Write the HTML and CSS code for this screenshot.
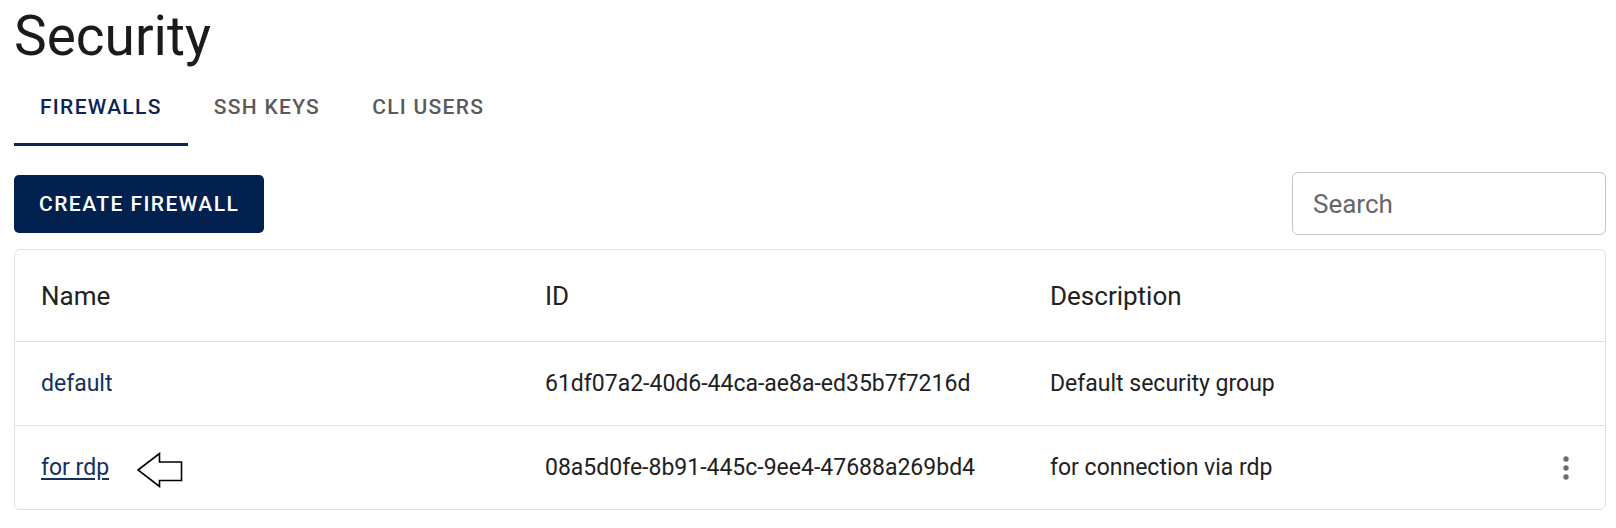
FILE: index.html
```html
<!DOCTYPE html>
<html lang="en">
<head>
<meta charset="utf-8">
<title>Security</title>
<link rel="stylesheet" href="styles.css">
</head>
<body>
<main class="page">
  <h1 class="title">Security</h1>
  <nav class="tabs">
    <a class="tab tab-active">FIREWALLS</a>
    <a class="tab">SSH KEYS</a>
    <a class="tab">CLI USERS</a>
  </nav>
  <div class="toolbar">
    <button class="btn-primary">CREATE FIREWALL</button>
    <div class="search"><input class="search-input" type="text" placeholder="Search"></div>
  </div>
  <div class="table">
    <div class="row head">
      <div class="cell">Name</div>
      <div class="cell">ID</div>
      <div class="cell">Description</div>
      <div class="cell"></div>
    </div>
    <div class="row">
      <div class="cell"><a class="link">default</a></div>
      <div class="cell">61df07a2-40d6-44ca-ae8a-ed35b7f7216d</div>
      <div class="cell">Default security group</div>
      <div class="cell"></div>
    </div>
    <div class="row">
      <div class="cell"><a class="link link-under">for rdp</a>
        <svg class="arrow" width="46" height="36" viewBox="0 0 46 36"><path d="M1 18 L22.5 1.5 L22.5 10 L44.5 10 L44.5 28.5 L22.5 28.5 L22.5 34.5 Z" fill="#fff" stroke="#000" stroke-width="1.6" stroke-linejoin="miter"/></svg>
      </div>
      <div class="cell">08a5d0fe-8b91-445c-9ee4-47688a269bd4</div>
      <div class="cell">for connection via rdp</div>
      <div class="cell cell-menu">
        <svg class="kebab" width="36" height="36" viewBox="0 0 24 24"><circle cx="12" cy="6" r="1.8" fill="#6b6b6b"/><circle cx="12" cy="12" r="1.8" fill="#6b6b6b"/><circle cx="12" cy="18" r="1.8" fill="#6b6b6b"/></svg>
      </div>
    </div>
  </div>
</main>
</body>
</html>
```

FILE: styles.css
```css
* { box-sizing: border-box; }
html, body { margin: 0; padding: 0; background: #fff; }
body {
  font-family: Roboto, "Noto Sans", "Liberation Sans", sans-serif;
  color: #212121;
}
.page {
  padding: 0 10px 0 14px;
}
.title {
  margin: 4px 0 0 0;
  font-size: 55px;
  font-weight: 400;
  line-height: 64px;
  color: #1b1b1b;
}
.tabs {
  display: flex;
  margin-top: 6px;
  height: 72px;
}
.tab {
  display: flex;
  align-items: center;
  padding: 0 26px 3px 26px;
  font-size: 21px;
  font-weight: 500;
  letter-spacing: 1.3px;
  color: #5a5a5a;
  border-bottom: 3px solid transparent;
}
.tab-active {
  color: #0d2553;
  border-bottom-color: #0d2553;
}
.toolbar {
  display: flex;
  justify-content: space-between;
  align-items: flex-start;
  margin-top: 26px;
}
.btn-primary {
  margin-top: 3px;
  height: 58px;
  padding: 0 25px 0 25px;
  border: none;
  border-radius: 5px;
  background: #03214f;
  color: #fff;
  font-family: inherit;
  font-size: 21px;
  font-weight: 500;
  letter-spacing: 1.45px;
}
.search {
  width: 314px;
  height: 63px;
  border: 1px solid #c4c4c4;
  border-radius: 6px;
  display: flex;
  align-items: center;
}
.search-input {
  width: 100%;
  border: none;
  outline: none;
  background: transparent;
  padding: 0 0 0 20px;
  font-family: inherit;
  font-size: 26px;
  color: #212121;
}
.search-input::placeholder { color: #666; opacity: 1; }
.table {
  margin-top: 14px;
  border: 1px solid #e0e0e0;
  border-radius: 6px;
}
.row {
  display: grid;
  grid-template-columns: 504px 505px 1fr 79px;
  height: 84px;
  border-top: 1px solid #e0e0e0;
  font-size: 23px;
}
.row.head {
  height: 91px;
  border-top: none;
  font-size: 26px;
}
.cell {
  display: flex;
  align-items: center;
  padding-left: 26px;
  color: #212121;
}
.link {
  color: #13305f;
  text-decoration: none;
}
.link-under {
  text-decoration: underline;
  text-underline-offset: 3px;
}
.arrow {
  margin-left: 28px;
  margin-top: 4px;
}
.cell-menu {
  padding-left: 0;
  justify-content: center;
}
```
